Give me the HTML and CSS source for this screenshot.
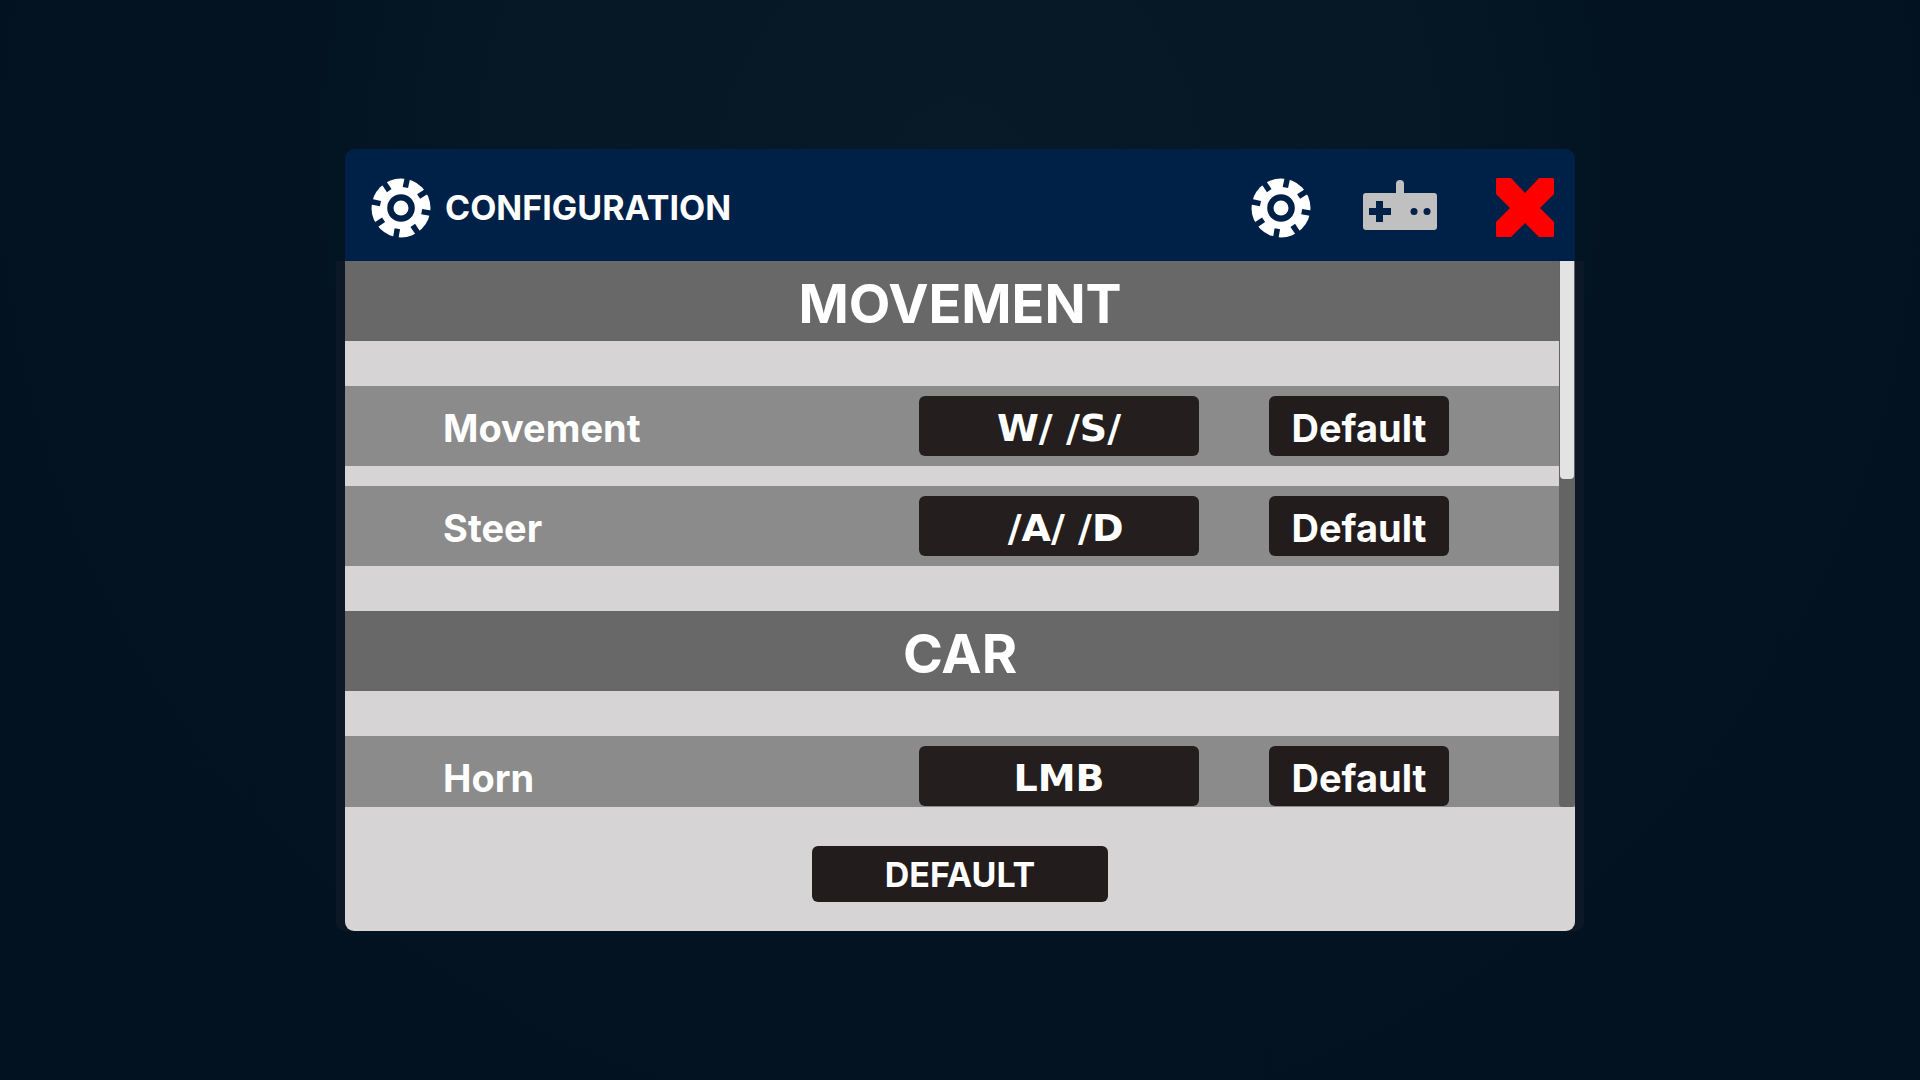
FILE: index.html
```html
<!DOCTYPE html>
<html lang="en">
<head>
  <meta charset="UTF-8">
  <title>Configuration</title>
  <meta name="viewport" content="width=device-width, initial-scale=1">
  <link rel="stylesheet" href="styles.css">
</head>
<body>

  <svg class="sprites" aria-hidden="true">
    <symbol id="gear" viewBox="-30 -30 60 60">
      <circle r="29.5" fill="#fff"/>
      <g stroke="#002147" stroke-width="5.5">
        <path d="M21 0H32" transform="rotate(-78)"/>
        <path d="M21 0H32" transform="rotate(-33)"/>
        <path d="M21 0H32" transform="rotate(10)"/>
        <path d="M21 0H32" transform="rotate(56)"/>
        <path d="M21 0H32" transform="rotate(100)"/>
        <path d="M21 0H32" transform="rotate(146)"/>
        <path d="M21 0H32" transform="rotate(192)"/>
        <path d="M21 0H32" transform="rotate(236)"/>
      </g>
      <circle r="13.8" fill="#002147"/>
      <circle r="7.5" fill="#fff"/>
    </symbol>
  </svg>

  <main class="panel">
    <header class="panel-header">
      <svg class="icon"><use href="#gear"/></svg>
      <h1>CONFIGURATION</h1>
      <nav class="tabs">
        <button class="icon-btn" aria-label="Settings">
          <svg class="icon"><use href="#gear"/></svg>
        </button>
        <button class="icon-btn" aria-label="Controls">
          <svg class="icon icon-pad" viewBox="0 0 80 60">
            <rect x="33" y="2" width="8" height="20" rx="4" fill="#c0c0c0"/>
            <rect x="0" y="15" width="74" height="37" rx="3" fill="#c0c0c0"/>
            <path d="M13 23h7v7h8v7h-8v7h-7v-7H6v-7h7z" fill="#002147"/>
            <circle cx="51" cy="33.5" r="3.5" fill="#002147"/>
            <circle cx="64" cy="33.5" r="3.5" fill="#002147"/>
          </svg>
        </button>
        <button class="icon-btn" aria-label="Close">
          <svg class="icon" viewBox="0 0 60 60">
            <path d="M2 0H16L30 15L44 0H58L59 1V16L45 30L59 44V58L58 59H44L30 45L16 59H2L1 58V44L15 30L1 16V1Z" fill="#f00"/>
          </svg>
        </button>
      </nav>
    </header>

    <div class="panel-body">
      <div class="list">
        <section class="group">
          <h2>MOVEMENT</h2>
          <div class="rows">
            <div class="row">
              <span class="name" id="movement">Movement</span>
              <button class="btn key" aria-describedby="movement">W/ /S/</button>
              <button class="btn reset" aria-describedby="movement">Default</button>
            </div>
            <div class="row">
              <span class="name" id="steer">Steer</span>
              <button class="btn key" aria-describedby="steer"> /A/ /D</button>
              <button class="btn reset" aria-describedby="steer">Default</button>
            </div>
          </div>
        </section>

        <section class="group">
          <h2>CAR</h2>
          <div class="rows">
            <div class="row">
              <span class="name" id="horn">Horn</span>
              <button class="btn key" aria-describedby="horn">LMB</button>
              <button class="btn reset" aria-describedby="horn">Default</button>
            </div>
          </div>
        </section>

        <div class="scrollbar"><div class="thumb"></div></div>
      </div>

      <footer class="panel-footer">
        <button class="btn default-all">DEFAULT</button>
      </footer>
    </div>
  </main>

</body>
</html>
```

FILE: styles.css
```css
* {
  box-sizing: border-box;
}

body {
  margin: 0;
  min-height: 100vh;
  display: flex;
  align-items: center;
  justify-content: center;
  background: radial-gradient(circle at 50% 15%, #071a28 0%, #061826 30%, #031322 50%, #021220 100%);
  font-family: Inter, "Liberation Sans", sans-serif;
  font-weight: 700;
  color: #fff;
}

h1, h2 {
  margin: 0;
}

button {
  font: inherit;
  color: inherit;
  border: none;
  cursor: pointer;
}

.sprites {
  position: absolute;
  width: 0;
  height: 0;
}

.panel {
  width: 94%;
  max-width: 1230px;
}

.panel-header {
  display: flex;
  align-items: center;
  gap: 14px;
  height: 112px;
  padding: 5px 20px 0 26px;
  background: #002147;
  border-radius: 9px 9px 0 0;
}

.panel-header h1 {
  flex: 1;
  font-size: 34px;
}

.tabs {
  display: flex;
  gap: 52px;
}

.icon-btn {
  display: flex;
  padding: 0;
  background: none;
}

.icon {
  display: block;
  width: 60px;
  height: 60px;
}

.icon-pad {
  width: 80px;
}

.panel-body {
  background: #d6d4d5;
  border-radius: 0 0 9px 9px;
  box-shadow: -9px 0 #0d1826, 9px 0 #0d1826;
}

.list {
  position: relative;
  max-height: 546px;
  overflow: hidden;
}

.group {
  margin-bottom: 45px;
}

.group h2 {
  height: 80px;
  padding-top: 6px;
  margin-bottom: 45px;
  background: #686868;
  font-size: 54px;
  line-height: 74px;
  text-align: center;
}

.rows {
  display: flex;
  flex-direction: column;
  gap: 20px;
}

.row {
  display: flex;
  align-items: center;
  height: 80px;
  padding: 0 126px 0 98px;
  background: #8b8b8b;
  font-size: 38px;
}

.name {
  flex: 1;
  padding-top: 4px;
}

.btn {
  height: 60px;
  padding: 4px 0 0;
  background: #231c1c;
  border-radius: 6px;
  white-space: pre;
}

.key {
  width: 280px;
  margin-right: 70px;
  background: #241f1e;
  font-family: "DejaVu Sans", sans-serif;
}

.reset {
  width: 180px;
}

/* scrollbar lies over the right edge of the rows */
.scrollbar {
  position: absolute;
  top: 0;
  right: 0;
  bottom: 0;
  width: 16px;
  padding: 0 1px;
  background: #646464;
  border-radius: 0 0 4px 4px;
}

.thumb {
  height: 40%;
  background: #e4e3e4;
  border-radius: 0 0 4px 4px;
}

.panel-footer {
  display: flex;
  justify-content: center;
  padding: 39px 0 29px;
}

.default-all {
  width: 296px;
  height: 56px;
  padding: 0;
  font-size: 34px;
}
```
